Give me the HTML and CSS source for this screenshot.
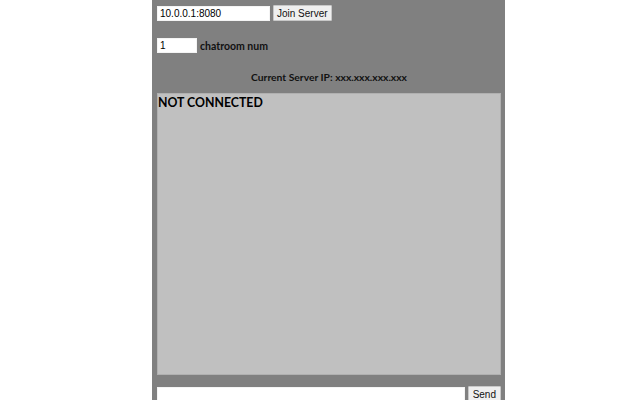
FILE: index.html
```html
<!DOCTYPE html>
<html>
<head>
<meta charset="utf-8">
<link rel="stylesheet" href="styles.css">
</head>
<body>
<div class="app">
  <div class="row row-server">
    <input class="field field-ip" type="text" value="10.0.0.1:8080">
    <button class="btn">Join Server</button>
  </div>
  <div class="row row-room">
    <input class="field field-room" type="text" value="1">
    <span class="label">chatroom num</span>
  </div>
  <div class="current">Current Server IP: xxx.xxx.xxx.xxx</div>
  <div class="log"><div class="status">NOT CONNECTED</div></div>
  <div class="row row-send">
    <input class="field field-msg" type="text" value="">
    <button class="btn">Send</button>
  </div>
</div>
</body>
</html>
```
FILE: styles.css
```css
html, body { margin: 0; padding: 0; background: #fff; height: 100%; }
body { overflow: hidden; }
.app {
  margin-left: 152px;
  width: 353px;
  height: 400px;
  background: #808080;
  box-sizing: border-box;
  padding: 5px 4px 0 5px;
  font-family: Lato, "Open Sans", sans-serif;
}
.row { display: flex; align-items: center; gap: 2px; }
.field {
  font-family: "Liberation Sans", Arial, sans-serif;
  font-size: 10px;
  height: 15px;
  box-sizing: border-box;
  border: 1px solid #f4f4f4;
  background: #fff;
  padding: 0 2px;
  margin: 0;
  outline: none;
  color: #000;
}
.field-ip { width: 113px; }
.field-room { width: 40px; }
.field-msg { width: 308px; }
.btn {
  font-family: "Liberation Sans", Arial, sans-serif;
  font-size: 10px;
  height: 16px;
  padding: 0 4px;
  margin: 0;
  background: #efefef;
  border: 1px solid #c8c8c8;
  color: #111;
  border-radius: 1px;
}
.row-server .btn { margin-left: 1px; padding: 0 3px; }
.row-room { margin-top: 17px; gap: 3px; }
.label { font-weight: 700; font-size: 10.5px; color: #111; }
.current {
  text-align: center;
  font-weight: 700;
  font-size: 10.3px;
  color: #111;
  margin-top: 16px;
  height: 16px;
  line-height: 16px;
}
.log {
  margin-top: 8px;
  height: 282px;
  background: #c0c0c0;
  border: 1px solid #b0b0b0;
  box-sizing: border-box;
}
.status { font-weight: 700; font-size: 12.3px; color: #000; line-height: 15px; padding-top: 1px; }
.row-send { margin-top: 11px; gap: 3px; }
.row-send .btn { height: 16px; }
```
